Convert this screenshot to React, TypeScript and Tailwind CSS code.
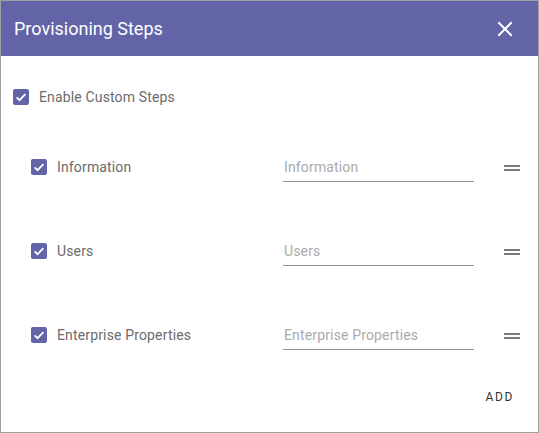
import { useState } from "react";

const STEPS = ["Information", "Users", "Enterprise Properties"];

function Check({ checked, onClick }: { checked: boolean; onClick: () => void }) {
  return (
    <button
      onClick={onClick}
      className={`flex h-4 w-4 items-center justify-center rounded-[2px] ${
        checked ? "bg-[#6264a7]" : "border-2 border-[#757575] bg-white"
      }`}
    >
      {checked && (
        <svg viewBox="0 0 24 24" className="h-[14px] w-[14px]" fill="none" stroke="white" strokeWidth={3}>
          <path d="M4.5 12.5l5 5 10-10.5" />
        </svg>
      )}
    </button>
  );
}

export default function App() {
  const [enabled, setEnabled] = useState(true);
  const [checked, setChecked] = useState<Record<string, boolean>>({
    Information: true,
    Users: true,
    "Enterprise Properties": true,
  });

  return (
    <div
      className="flex h-[433px] w-[539px] flex-col border border-[#a0a0a0] bg-white tracking-[0.15px]"
      style={{ fontFamily: "Roboto, 'Liberation Sans', sans-serif" }}
    >
      <div className="flex h-[55px] shrink-0 items-center justify-between bg-[#6264a7] pl-[13px] pr-[25px]">
        <h1 className="text-[18px] tracking-normal text-white">Provisioning Steps</h1>
        <button className="text-white">
          <svg viewBox="0 0 16 16" className="h-4 w-4" stroke="white" strokeWidth={2} strokeLinecap="square">
            <path d="M2 2l12 12M14 2L2 14" />
          </svg>
        </button>
      </div>

      <div className="mt-[29px] flex h-6 items-center gap-[10px] pl-[12px]">
        <Check checked={enabled} onClick={() => setEnabled(!enabled)} />
        <span className="text-[14px] text-[#6b6b6b]">Enable Custom Steps</span>
      </div>

      <div className="mt-[38px] flex flex-col gap-[44px]">
        {STEPS.map((s) => (
          <div key={s} className="flex h-10 items-center pl-[30px]">
            <div className="flex w-[252px] items-center gap-[10px]">
              <Check
                checked={checked[s]}
                onClick={() => setChecked({ ...checked, [s]: !checked[s] })}
              />
              <span className="text-[14px] text-[#6b6b6b]">{s}</span>
            </div>
            <input
              placeholder={s}
              className="h-[30px] w-[191px] border-b border-[#949494] bg-transparent px-px text-[14px] text-[#444] placeholder-[#ababab] outline-none"
            />
            <div className="ml-[30px] flex w-4 flex-col gap-[2px] pt-[2px]">
              <span className="h-[2px] bg-[#7a7a7a]" />
              <span className="h-[2px] bg-[#7a7a7a]" />
            </div>
          </div>
        ))}
      </div>

      <div className="mt-auto flex justify-end pb-[26px] pr-[24px]">
        <button className="text-[12px] font-normal tracking-[1.6px] text-[#333]">ADD</button>
      </div>
    </div>
  );
}
